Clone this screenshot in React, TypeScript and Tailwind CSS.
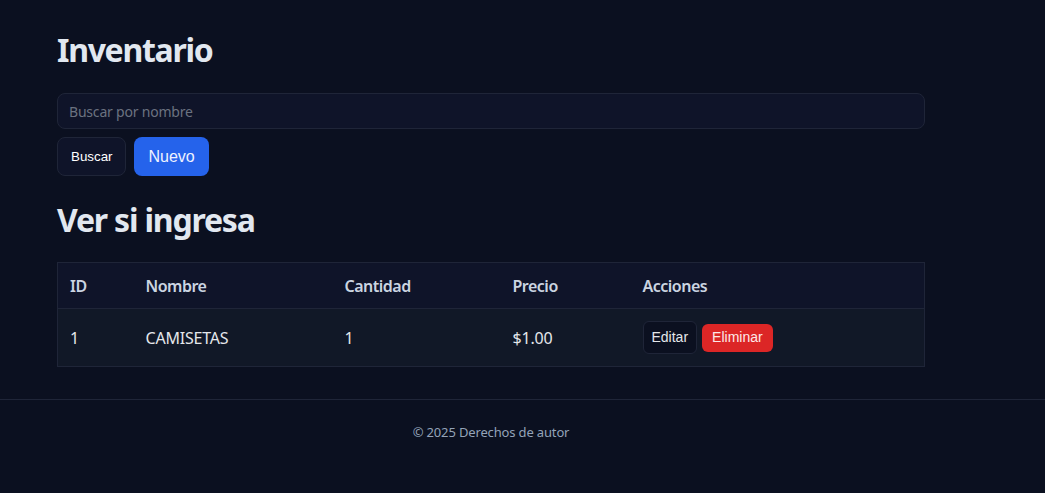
import React from "react";

export default function App() {
  return (
    <div className="min-h-screen bg-[#0b1020] font-['Noto_Sans',sans-serif] text-[#e2e8f0]">
      <main className="ml-[57px] w-[868px] pb-[32px]">
        <h1 className="pt-[30px] text-[32px] font-bold leading-[40px] tracking-[-1.3px] text-[#e2e8f0]">Inventario</h1>
        <input
          className="mt-[23px] block h-[36px] w-full rounded-[8px] border border-[#1f2538] bg-[#0f1429] px-[11px] text-[14px] tracking-[-0.2px] text-[#e2e8f0] placeholder:text-[#6b7280] outline-none"
          placeholder="Buscar por nombre"
        />
        <div className="mt-[8px] flex gap-[8px]">
          <button className="h-[39px] rounded-[8px] border border-[#1f2538] bg-[#0f1429] px-[13px] font-['Liberation_Sans',sans-serif] text-[13.33px] text-white">
            Buscar
          </button>
          <button className="h-[39px] rounded-[8px] bg-[#2563eb] px-[14px] font-['Liberation_Sans',sans-serif] text-[16px] text-[#eef2ff]">
            Nuevo
          </button>
        </div>
        <h2 className="mt-[24px] text-[32px] font-bold leading-[40px] tracking-[-1.2px] text-[#e2e8f0]">Ver si ingresa</h2>
        <table className="mt-[22px] w-full table-fixed border-collapse border border-[#1f2538] text-left text-[16px]">
          <thead>
            <tr className="h-[46px] bg-[#0f1429] text-[#cbd5e1]">
              <th className="w-[76px] px-[12px] font-semibold tracking-[-0.5px]">ID</th>
              <th className="w-[199px] px-[12px] font-semibold tracking-[-0.5px]">Nombre</th>
              <th className="w-[168px] px-[12px] font-semibold tracking-[-0.5px]">Cantidad</th>
              <th className="w-[130px] px-[12px] font-semibold tracking-[-0.5px]">Precio</th>
              <th className="px-[12px] font-semibold tracking-[-0.5px]">Acciones</th>
            </tr>
          </thead>
          <tbody>
            <tr className="h-[58px] border-t border-[#1f2538] bg-[#111827] text-[#e5e7eb]">
              <td className="px-[12px]">1</td>
              <td className="px-[12px] tracking-[-0.2px]">CAMISETAS</td>
              <td className="px-[12px]">1</td>
              <td className="px-[12px] tracking-[-0.2px]">$1.00</td>
              <td className="px-[12px]">
                <div className="flex items-center gap-[5px]">
                  <button className="h-[33px] rounded-[6px] border border-[#1f2538] bg-[#0b1020] px-[8px] font-['Liberation_Sans',sans-serif] text-[14px] text-[#e5e7eb]">
                    Editar
                  </button>
                  <button className="h-[28px] rounded-[6px] bg-[#dc2626] px-[10px] font-['Liberation_Sans',sans-serif] text-[14px] text-[#fde8e8]">
                    Eliminar
                  </button>
                </div>
              </td>
            </tr>
          </tbody>
        </table>
      </main>
      <footer className="border-t border-[#1f2538]">
        <div className="ml-[57px] w-[868px] pt-[22px] pb-[50px] text-center text-[13px] leading-[20px] tracking-[-0.15px] text-[#94a3b8]">
          © 2025 Derechos de autor
        </div>
      </footer>
    </div>
  );
}
